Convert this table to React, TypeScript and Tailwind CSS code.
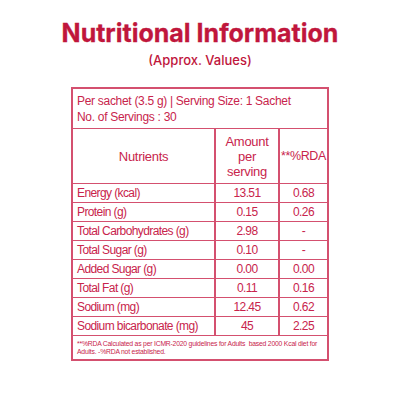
import React from "react";

const rows: [string, string, string][] = [
    ["Energy (kcal)", "13.51", "0.68"],
    ["Protein (g)", "0.15", "0.26"],
    ["Total Carbohydrates (g)", "2.98", "-"],
    ["Total Sugar (g)", "0.10", "-"],
    ["Added Sugar (g)", "0.00", "0.00"],
    ["Total Fat (g)", "0.11", "0.16"],
    ["Sodium (mg)", "12.45", "0.62"],
    ["Sodium bicarbonate (mg)", "45", "2.25"],
];

export default function App() {
    return (
        <div className="w-[400px] h-[400px] bg-white flex flex-col items-center font-['Liberation_Sans',sans-serif]">
            <h1 className="mt-[17px] text-[25px] leading-[32px] font-bold text-[#c0163c] font-['Inter',sans-serif] [-webkit-text-stroke:0.3px_#c0163c]">
                Nutritional Information
            </h1>
            <p className="mt-[3px] text-[13px] leading-[16px] text-[#c0163c] font-medium font-['Inter',sans-serif]">
                (Approx. Values)
            </p>
            <div className="mt-[19px] w-[258px] border-2 border-[#d4506f] text-[#c8244c]">
                <div className="px-[4px] pt-[4px] pb-[3px] text-[12px] leading-[16px] tracking-[-0.3px]">
                    <div>Per sachet (3.5 g) | Serving Size: 1 Sachet</div>
                    <div>No. of Servings : 30</div>
                </div>
                <div className="flex h-[55px] border-t border-[#d4506f] text-[13px] leading-[15px] tracking-[-0.3px]">
                    <div className="w-[141px] flex items-center justify-center">Nutrients</div>
                    <div className="w-[64px] border-l-2 border-[#d4506f] flex items-center justify-center text-center">
                        Amount<br />per<br />serving
                    </div>
                    <div className="flex-1 border-l-2 border-[#d4506f] flex items-center justify-center text-[12.5px] tracking-[-0.4px]">**%RDA</div>
                </div>
                {rows.map(([name, amt, rda]) => (
                    <div key={name} className="flex h-[19px] border-t border-[#d4506f] text-[12px] leading-[18px] tracking-[-0.6px]">
                        <div className="w-[141px] pl-[4px]">{name}</div>
                        <div className="w-[64px] border-l-2 border-[#d4506f] text-center">{amt}</div>
                        <div className="flex-1 border-l-2 border-[#d4506f] text-center">{rda}</div>
                    </div>
                ))}
                <div className="border-t border-[#d4506f] px-[4px] pt-[4px] text-[6.8px] leading-[8px] tracking-[-0.2px] h-[24px]">
                    **%RDA Calculated as per ICMR-2020 guidelines for Adults&nbsp; based 2000 Kcal diet for
                    <br />
                    Adults. -%RDA not established.
                </div>
            </div>
        </div>
    );
}
